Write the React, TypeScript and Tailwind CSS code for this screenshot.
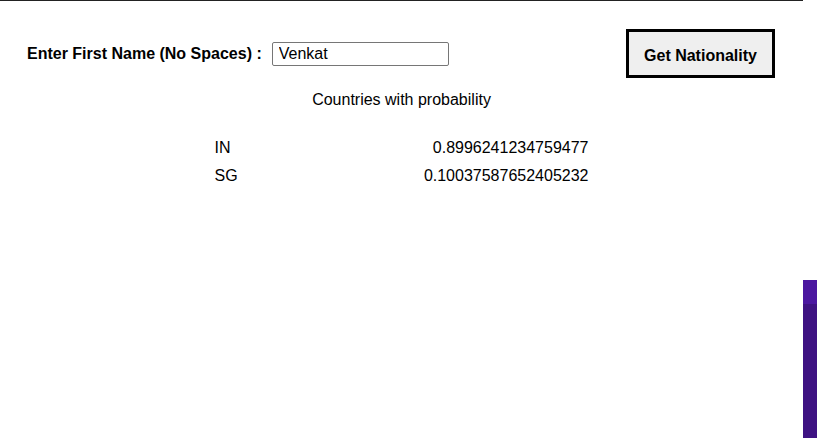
export default function App() {
  const rows = [
    { code: 'IN', prob: '0.8996241234759477' },
    { code: 'SG', prob: '0.10037587652405232' },
  ]

  return (
    <div className="relative h-[438px] w-[817px] overflow-hidden bg-white font-['Liberation_Sans',Arial,sans-serif] text-black">
      <div className="w-[803px] border-t-[1.5px] border-[#222]">
        <div className="flex items-start pl-[27px] pr-[28px] pt-[28px]">
          <div className="flex flex-1 items-center pt-[13px]">
            <label className="text-[16px] font-bold leading-[18px]">Enter First Name (No Spaces) :</label>
            <input
              defaultValue="Venkat"
              className="ml-[10px] h-[24px] w-[177px] rounded-[2px] border border-[#767676] px-[6px] text-[16px] outline-none"
            />
          </div>
          <button className="h-[49px] w-[149px] border-[3px] border-black bg-[#efefef] pt-[4px] text-[16px] font-bold">
            Get Nationality
          </button>
        </div>
        <p className="mt-[13px] text-center text-[16px] leading-[18px]">Countries with probability</p>
        <div className="mx-auto mt-[30px] flex w-[374px] flex-col gap-[10px] text-[16px] leading-[18px]">
          {rows.map((r) => (
            <div key={r.code} className="flex justify-between">
              <span>{r.code}</span>
              <span>{r.prob}</span>
            </div>
          ))}
        </div>
      </div>
      <div className="absolute right-0 top-[280px] flex h-[158px] w-[14px] flex-col">
        <div className="h-[24px] bg-[#4b16a0]" />
        <div className="flex-1 bg-[#3e1282]" />
      </div>
    </div>
  )
}
